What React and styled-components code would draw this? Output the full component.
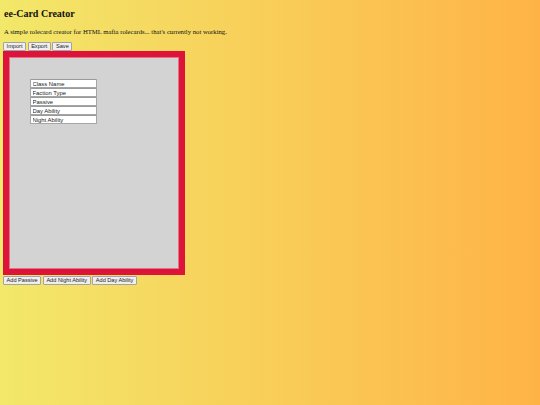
import React from 'react';
import styled, { createGlobalStyle } from 'styled-components';

const GlobalStyle = createGlobalStyle`
  html, body {
    margin: 0;
    padding: 0;
  }
  body {
    font-family: "Liberation Serif", "Times New Roman", serif;
  }
`;

const Page = styled.div`
  min-height: 100vh;
  box-sizing: border-box;
  padding: 8px 3px 0 3px;
  background: linear-gradient(to right, #f2e86a, #ffb347);
  color: #111;
`;

const Title = styled.h2`
  margin: 0 0 0 1px;
  font-size: 10px;
  line-height: 12px;
  font-weight: bold;
`;

const Desc = styled.p`
  margin: 8px 0 0 1px;
  font-size: 6.7px;
  line-height: 8px;
`;

const ButtonRow = styled.div`
  display: flex;
  gap: ${(p) => p.gap || 1.5}px;
  margin-top: ${(p) => p.top || 0}px;
`;

const Button = styled.button`
  box-sizing: border-box;
  height: 9px;
  padding: 0 2.6px;
  font-family: "Liberation Sans", Arial, sans-serif;
  font-size: 5.6px;
  line-height: 7px;
  color: #222;
  background: #efefef;
  border: 1px solid #a3a3a3;
  border-radius: 1px;
  cursor: pointer;
`;

const Card = styled.div`
  box-sizing: border-box;
  width: 182px;
  height: 224px;
  border: 7px solid #dc143c;
  background: #d3d3d3;
  outline: 0.5px solid #e8707f;
  outline-offset: -7.5px;
  padding: 21px 0 0 20px;
`;

const Fields = styled.div`
  display: flex;
  flex-direction: column;
  width: 67px;
`;

const Field = styled.input`
  box-sizing: border-box;
  width: 67px;
  height: 9px;
  margin: 0;
  padding: 0 1.5px;
  font-family: "Liberation Sans", Arial, sans-serif;
  font-size: 5.9px;
  color: #222;
  background: #fff;
  border: 1px solid #a5a5a5;
  border-top-color: #9a9a9a;
  border-radius: 1px;
  outline: none;
`;

const fields = ['Class Name', 'Faction Type', 'Passive', 'Day Ability', 'Night Ability'];

const App = () => {
  return (
    <>
      <GlobalStyle />
      <Page>
        <Title>ee-Card Creator</Title>
        <Desc>A simple rolecard creator for HTML mafia rolecards... that's currently not working.</Desc>
        <ButtonRow top={6}>
          <Button>Import</Button>
          <Button>Export</Button>
          <Button>Save</Button>
        </ButtonRow>
        <Card>
          <Fields>
            {fields.map((f) => (
              <Field key={f} defaultValue={f} />
            ))}
          </Fields>
        </Card>
        <ButtonRow top={1}>
          <Button>Add Passive</Button>
          <Button>Add Night Ability</Button>
          <Button>Add Day Ability</Button>
        </ButtonRow>
      </Page>
    </>
  );
};

export default App;
